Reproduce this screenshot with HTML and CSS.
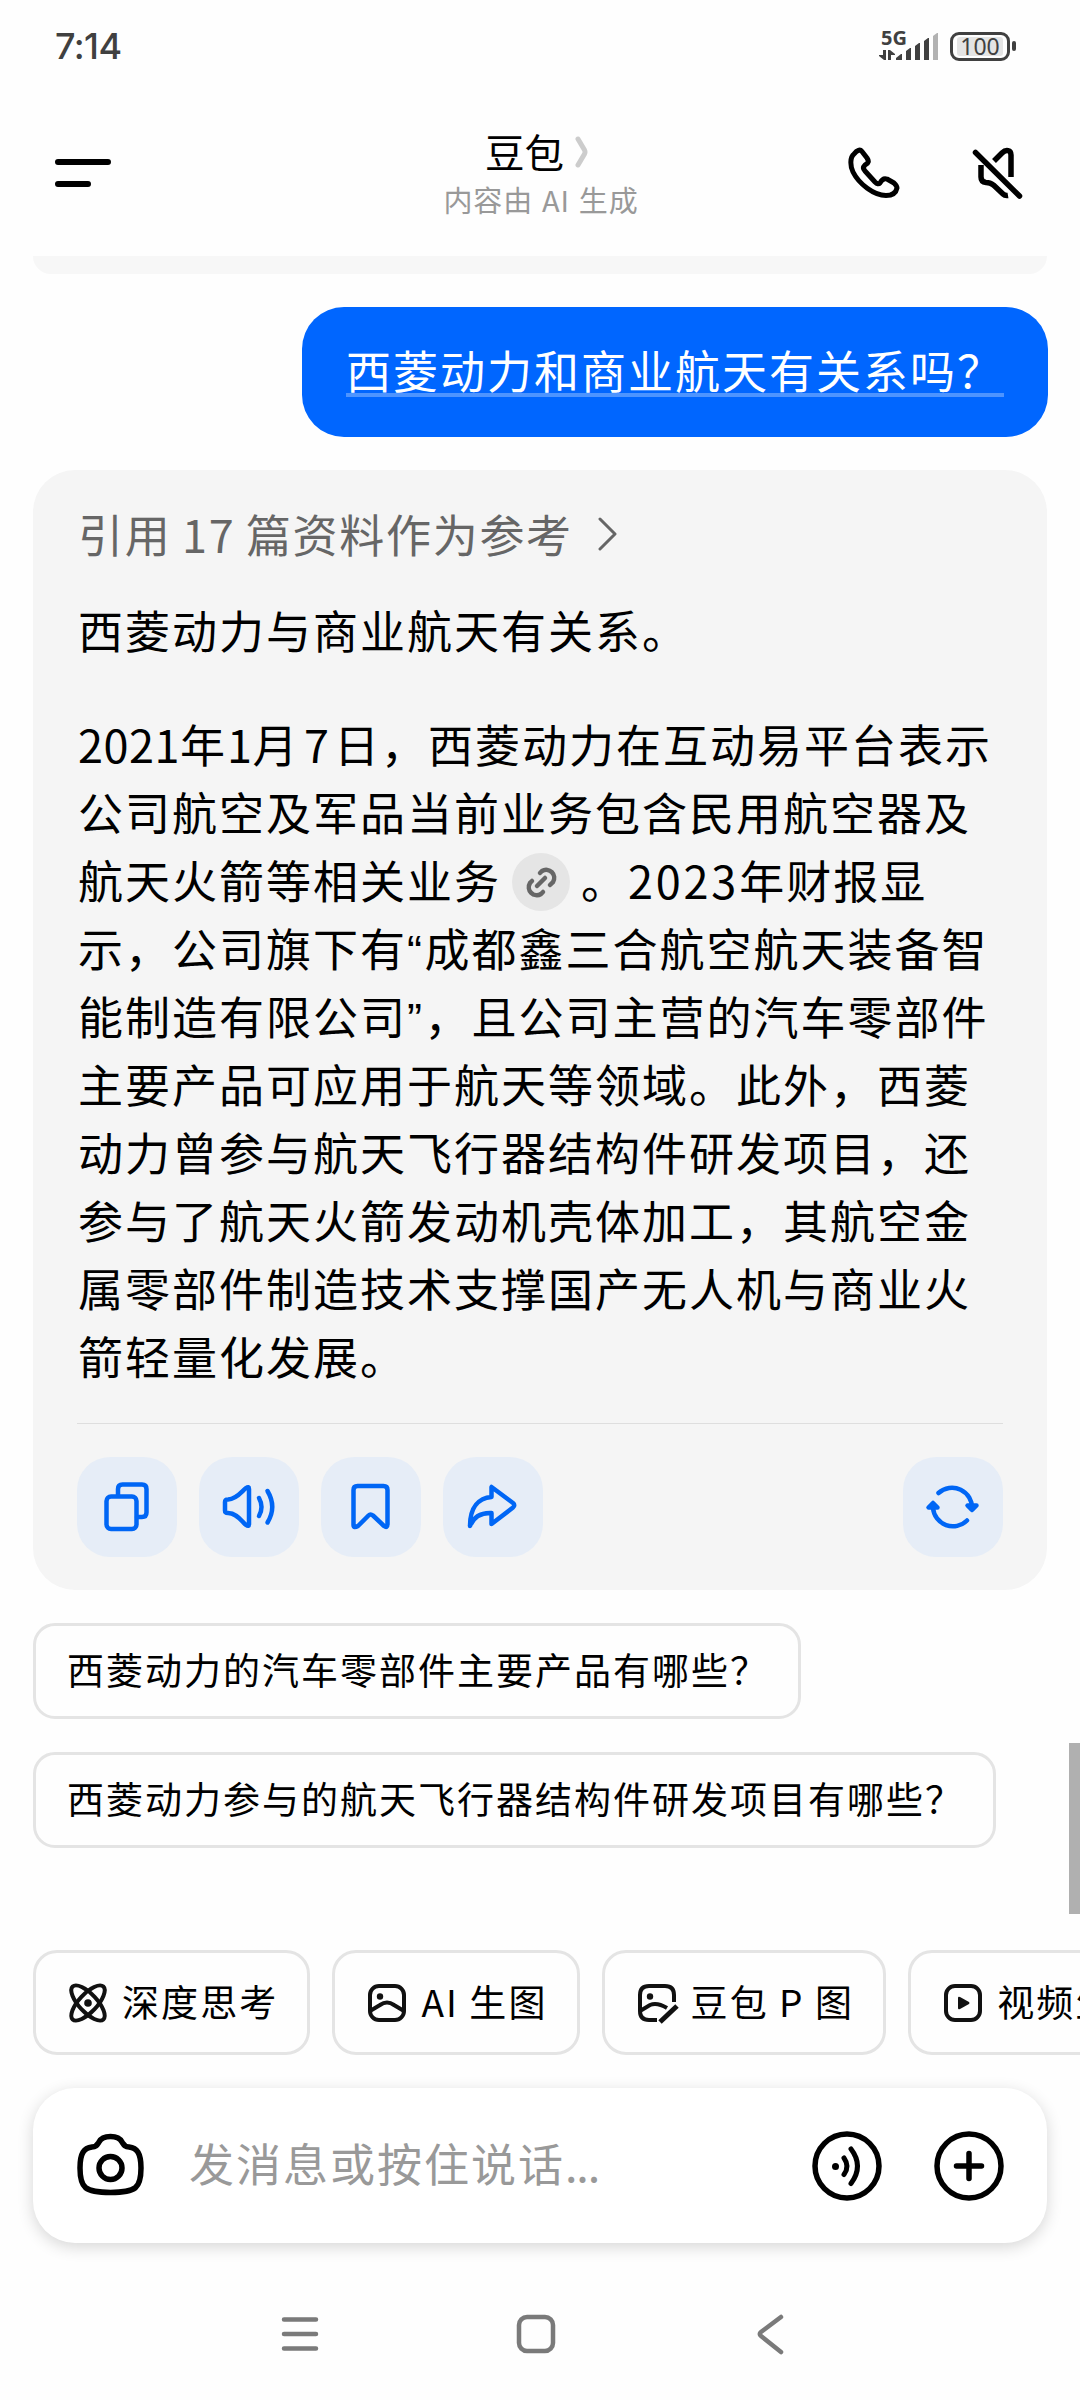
FILE: index.html
```
<!DOCTYPE html>
<html lang="zh-CN">
<head>
<meta charset="utf-8">
<title>豆包</title>
<link rel="stylesheet" href="styles.css">
</head>

<body>
<div class="phone">
	<div class="status">
		<span class="time">7:14</span>
		<div class="status-right">
			<svg class="signal" width="62" height="34" viewBox="0 0 62 34">
				<text class="net" x="2" y="16">5G</text>
				<path fill="#404040" d="M4 21h3v10h-2l-5-4v-1h4zM9 31v-10h2l5 4v1h-4v5zM17 31v-2l5-4h1v6zM27 31v-9l4-3h1v12zM36 31v-14l4-3h1v17zM45 31v-19l4-3h1v22z"/>
				<path fill="#b2b2b2" d="M54 31v-24l4-3h1v27z"/>
			</svg>
			<div class="battery"><span>100</span></div>
			<i class="nub"></i>
		</div>
	</div>

	<div class="header">
		<svg width="60" height="60" viewBox="0 0 60 60" fill="none" stroke="#000" stroke-width="6" stroke-linecap="round"><path d="M5 18h50M5 40h30"/></svg>
		<div class="title">
			<div class="name"><span>豆包</span><svg width="16" height="32" viewBox="0 0 16 32" fill="none" stroke="#ccc" stroke-width="5" stroke-linecap="round" stroke-linejoin="round"><path d="M4 3L10.500 14Q11.500 16 10.500 18L4 29"/></svg></div>
			<p>内容由 AI 生成</p>
		</div>
		<div class="header-right">
			<svg width="54" height="54" viewBox="0 0 54 54" fill="none" stroke="#000" stroke-width="5" stroke-linejoin="round"><path d="M8 7C4 10 4 19 7 25C13 37 28 48.500 40 48.500C46 48.500 50 46 51 41C51 39 50 38 48 36L41 32C38 31 36 32 34 36Q32 38 29 35L19 24Q16 21 19 18C23 16 23 14 21 11L16 4.500C14 2 11 3 8 7Z"/></svg>
			<svg width="54" height="54" viewBox="0 0 54 54" fill="none" stroke="#000" stroke-width="5.500" stroke-linejoin="round"><path stroke-linecap="round" d="M5.500 5.500L49.500 49"/><path d="M24 14L32 6C36 2 41 3 41 8V30M11 18V30Q11 35 16 35.500C21 35.500 22 37 24 38.500L33 47Q35 49 38 48.500"/></svg>
		</div>
	</div>

	<div class="prev"></div>

	<div class="ask"><span>西菱动力和商业航天有关系吗？</span></div>

	<div class="answer">
		<div class="refs"><span>引用 17 篇资料作为参考</span><svg width="20" height="36" viewBox="0 0 20 36" fill="none" stroke="#666" stroke-width="3" stroke-linecap="round" stroke-linejoin="round"><path d="M2 3l15 15L2 33"/></svg></div>
		<p class="lead">西菱动力与商业航天有关系。</p>
		<p class="text"><b>2021</b>年<b>1</b>月<b class="one">7</b>日，西菱动力在互动易平台表示<br>公司航空及军品当前业务包含民用航空器及<br>航天火箭等相关业务<i class="link"><svg width="58" height="58" viewBox="0 0 58 58" fill="none" stroke="#666" stroke-width="4.500" stroke-linecap="round"><path d="M25 33l8-8M28 20l2-2a8 8 0 0 1 11 11l-3 3M20 28l-2 2a8 8 0 0 0 11 11l2-2"/></svg></i>。<b class="wide">2023</b>年财报显<br>示，公司旗下有<q>“</q>成都鑫三合航空航天装备智<br>能制造有限公司<q>”</q>，且公司主营的汽车零部件<br>主要产品可应用于航天等领域。此外，西菱<br>动力曾参与航天飞行器结构件研发项目，还<br>参与了航天火箭发动机壳体加工，其航空金<br>属零部件制造技术支撑国产无人机与商业火<br>箭轻量化发展。</p>
		<div class="tools">
			<a class="tool"><svg viewBox="0 0 100 100"><path d="M41 38V32Q41 27.500 45.500 27.500H65Q69.500 27.500 69.500 32V55.500Q69.500 60 65 60H60"/><rect x="29.500" y="39.500" width="30" height="32.500" rx="4.500"/></svg></a>
			<a class="tool"><svg viewBox="0 0 100 100"><path d="M26 45Q26 42.500 29 42.500C38 42 43 34 47 31Q50 29 50 32V67Q50 70 47 68C43 65 38 56 29 56Q26 56 26 53.500Z"/><path d="M60 41Q65 50 60 59M68.500 34Q78 50 68.500 65.500"/></svg></a>
			<a class="tool"><svg viewBox="0 0 100 100"><path d="M32.500 68V33Q32.500 29 36.500 29H62.500Q66.500 29 66.500 33V67Q66.500 71.500 63 69L52 58.500Q49.500 56.500 47.500 58.500L37 69Q32.500 71.500 32.500 68Z"/></svg></a>
			<a class="tool"><svg viewBox="0 0 100 100"><path d="M48.500 30V40C36 41 27 50 27 69C31 59 38 55.500 48.500 56V67L70 50.500Q72.500 48 70 46Z"/></svg></a>
			<a class="tool last"><svg viewBox="0 0 100 100"><path d="M35.500 36A20 20 0 0 1 69 52M30 51A20 20 0 0 0 64 63.500"/><path fill="#0066f5" d="M64.500 48.500H73.500L69 53ZM25.500 50.500H34.500L30 46Z"/></svg></a>
		</div>
	</div>

	<div class="suggest">西菱动力的汽车零部件主要产品有哪些？</div>
	<div class="suggest">西菱动力参与的航天飞行器结构件研发项目有哪些？</div>

	<div class="chips">
		<div class="chip"><svg width="40" height="40" viewBox="0 0 40 40"><ellipse cx="20" cy="20" rx="22.500" ry="9" transform="rotate(47 20 20)"/><ellipse cx="20" cy="20" rx="22.500" ry="9" transform="rotate(-47 20 20)"/><circle class="dot" cx="20" cy="20" r="3.800"/></svg><span>深度思考</span></div>
		<div class="chip"><svg width="40" height="40" viewBox="0 0 40 40"><rect x="3" y="3" width="34" height="34" rx="9"/><path d="M3 28L13 22Q20 17 27 22L37 28"/><circle class="dot" cx="13" cy="13.500" r="3.200"/></svg><span>AI 生图</span></div>
		<div class="chip"><svg width="40" height="40" viewBox="0 0 40 40"><path d="M37 19V12Q37 3 28 3H12Q3 3 3 12V28Q3 37 12 37H20M3 28L13 22Q20 19 30 25"/><path stroke-width="5" d="M23 39L40 23"/><circle class="dot" cx="13" cy="13.500" r="3.200"/></svg><span>豆包 P 图</span></div>
		<div class="chip"><svg width="40" height="40" viewBox="0 0 40 40"><rect x="3" y="3" width="34" height="34" rx="9"/><path class="dot" d="M15 15Q15 13 17 14L26 19Q27 20 26 21L17 26Q15 27 15 25Z"/></svg><span>视频生成</span></div>
	</div>

	<div class="input">
		<svg class="camera" width="70" height="70" viewBox="0 0 70 70" fill="none" stroke="#000" stroke-width="5.500"><path d="M16 16C20 16 21 14 23 11C25 7 28 5.500 34.500 5.500S44 7 46 11C48 14 49 16 53 16C61 17 65 22 65 37C65 57 60 61.500 34.500 61.500S4 57 4 37C4 22 8 17 16 16Z"/><circle cx="34.500" cy="37" r="11.500"/></svg>
		<span class="placeholder">发消息或按住说话<b>...</b></span>
		<svg width="70" height="70" viewBox="0 0 70 70" fill="none" stroke="#000" stroke-width="5.500" stroke-linecap="round"><circle cx="35" cy="35" r="32"/><circle cx="23.500" cy="35.500" r="3.500" fill="#000" stroke="none"/><path stroke-width="5" d="M32 27Q38 35.500 32 43.500M39 18Q52 35 39 52.500"/></svg>
		<svg width="70" height="70" viewBox="0 0 70 70" fill="none" stroke="#000" stroke-width="5.500" stroke-linecap="round"><circle cx="35" cy="35" r="32"/><path d="M35 22.500v25M22.500 35h25"/></svg>
	</div>

	<div class="nav">
		<svg width="44" height="44" viewBox="0 0 44 44"><path d="M6 7.500h32M6 22h32M6 36.500h32"/></svg>
		<svg width="44" height="44" viewBox="0 0 44 44"><rect x="5" y="5" width="34" height="34" rx="8"/></svg>
		<svg width="44" height="44" viewBox="0 0 44 44"><path d="M31 5L11 20Q8.500 22 11 24L31 40"/></svg>
	</div>

	<div class="scroll"></div>
</div>
</body>
</html>
```
FILE: styles.css
```
*{margin:0;padding:0;box-sizing:border-box;}
body{width:1080px; height:2400px; overflow:hidden; background:#fefefe; font-family:"Noto Sans CJK SC",sans-serif; color:#000;}
i,b,q{font-style:normal; font-weight:normal; quotes:none;}
q:before,q:after{content:none;}
svg{display:block; flex:none;}
.phone{width:1080px; height:2400px; position:relative; overflow:hidden;}

.status{height:92px; padding:0 64px 0 55px; display:flex; justify-content:space-between; align-items:center; color:#404040;}
.time{font:500 36px/40px Inter,sans-serif; letter-spacing:-.6px;}
.status-right{display:flex; align-items:center;}
.signal{margin-right:9px; overflow:visible;}
.net{font:bold 20px "Noto Sans",sans-serif; fill:#404040;}
.battery{width:60px; height:29px; border:3px solid #404040; border-radius:9px; padding:2px 4px;}
.battery span{display:block; height:19px; background:#e4e4e4; border-radius:3px; font:23px/19px "Noto Sans",sans-serif; text-align:center;}
.nub{width:4px; height:10px; background:#404040; border-radius:2px; margin-left:2px;}

.header{height:164px; padding:0 56px 0 53px; display:grid; grid-template-columns:1fr auto 1fr; align-items:center;}
.title{text-align:center;}
.name{display:flex; justify-content:center; align-items:center; gap:10px; font-size:39.5px; line-height:48px; padding:1px 2px 0 0;}
.name svg{margin-top:2px;}
.title p{font-size:29px; line-height:48px; color:#999; letter-spacing:.9px; word-spacing:1.5px; padding-left:5px;}
.header-right{display:flex; justify-content:flex-end; gap:70px;}

.prev{height:18px; margin:0 33px; background:#f7f7f7; border-radius:0 0 20px 20px;}

.ask{width:746px; height:130px; margin:33px 32px 0 auto; border-radius:42px; background:#06f; color:#fff; padding:37px 44px; font-size:45px; line-height:52px; letter-spacing:2px;}
.ask span{display:block; height:53px; width:658px; border-bottom:4px solid #4d94ff; white-space:nowrap;}

.answer{height:1120px; margin:33px 33px 0; padding:30px 44px 0 45px; background:#f5f5f5; border-radius:42px; font-size:45px; line-height:68px; letter-spacing:2px;}
.refs{display:flex; align-items:center; gap:25px; color:#666; letter-spacing:1.7px; word-spacing:-1.2px;}
.lead{margin-top:28px;}
.text{height:680px; margin-top:46px; white-space:nowrap;}
.text b{letter-spacing:.5px;}
.text .one{margin:0 4.5px;}
.text .wide{letter-spacing:2.8px;}
.text q{font-family:"Liberation Sans",sans-serif; line-height:1; letter-spacing:2.5px;}
.link{display:inline-block; width:58px; height:58px; margin:0 11px; border-radius:50%; background:#e5e5e5; vertical-align:-12px; line-height:0;}
.tools{margin:33px 0 0 -1px; padding-top:33px; border-top:1px solid #dedede; display:flex; gap:22px;}
.tool{width:100px; height:100px; border-radius:33px; background:#e6edf7;}
.tool svg{fill:none; stroke:#0066f5; stroke-width:4.5; stroke-linecap:round; stroke-linejoin:round;}
.last{margin-left:auto;}

.suggest{width:max-content; height:96px; margin:33px 0 0 33px; padding:0 29px 0 31px; border:3px solid #e4e4e4; border-radius:22px; font-size:37px; line-height:87px; letter-spacing:2px;}

.chips{width:1200px; margin:102px 0 0 33px; display:flex; gap:22px;}
.chip{height:105px; padding:0 29px 0 32px; border:3px solid #e4e4e4; border-radius:24px; display:flex; align-items:center; gap:14px; font-size:37px; letter-spacing:2.1px; white-space:nowrap;}
.chip span{padding-bottom:3px;}
.chip svg{fill:none; stroke:#111; stroke-width:4; overflow:visible;}
.chip .dot{fill:#111; stroke:none;}

.input{height:155px; margin:33px 33px 0; padding:0 43px; border-radius:42px; background:#fff; box-shadow:0 4px 16px rgba(0,0,0,.16); display:flex; align-items:center; gap:52px;}
.camera{margin-right:-9px;}
.placeholder{flex:1; color:#999; font-size:45px; letter-spacing:2px; padding-bottom:7px;}
.placeholder b{letter-spacing:-1.2px;}

.nav{margin:69px 0 0; padding:0 286px 0 278px; display:flex; justify-content:space-between;}
.nav svg{fill:none; stroke:#7a7a7a; stroke-width:4.5; stroke-linecap:round;}

.scroll{position:absolute; right:0; top:1743px; width:11px; height:171px; background:#b0b0b0;}
```
